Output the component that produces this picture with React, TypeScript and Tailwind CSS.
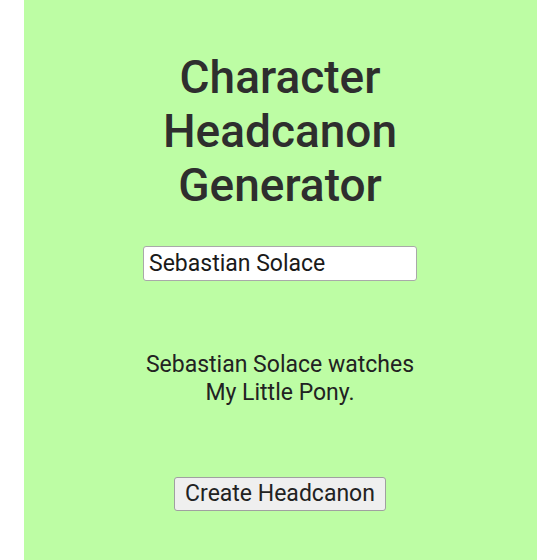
import React, { useState } from "react";

const App = () => {
  const [name, setName] = useState("Sebastian Solace");

  return (
    <div className="min-h-[560px] bg-white font-['Roboto',sans-serif]">
      <div className="mx-auto flex min-h-[560px] w-[513px] flex-col items-center bg-[#bdfda4] pt-[50px] text-[#2b2b2b]">
        <h1 className="w-[300px] text-center text-[46px] font-medium leading-[54px] text-[#2e2e2e]">
          Character Headcanon Generator
        </h1>
        <input
          value={name}
          onChange={(e) => setName(e.target.value)}
          className="mt-[34px] h-[35px] w-[274px] rounded-[3px] border border-[#a9a9a9] bg-white px-[5px] text-[23px] text-[#1a1a1a] outline-none"
        />
        <p className="mt-[70px] w-[280px] text-center text-[23px] leading-[28px] text-[#222]">
          {name} watches My Little Pony.
        </p>
        <button className="mt-[70px] h-[34px] rounded-[3px] border border-[#a0a0a0] bg-[#efefef] px-[10px] text-[23px] leading-[28px] text-[#222]">
          Create Headcanon
        </button>
      </div>
    </div>
  );
};

export default App;
